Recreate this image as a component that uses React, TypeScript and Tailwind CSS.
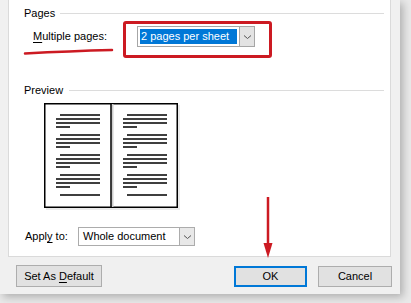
import React from "react";

function Chevron() {
  return (
    <svg width="9" height="6" viewBox="0 0 9 6">
      <path d="M1 1.5 L4.5 4.5 L8 1.5" fill="none" stroke="#555" strokeWidth="1" />
    </svg>
  );
}

function Preview() {
  const groups = [12, 32, 52, 72];
  const lines: React.ReactNode[] = [];
  const page = (ox: number, key: string) => {
    groups.forEach((y, i) => {
      lines.push(<rect key={key + i + "a"} x={ox + 16} y={y - 0.75} width={40} height={1.5} fill="#000" />);
      lines.push(<rect key={key + i + "b"} x={ox + 12} y={y + 4 - 0.75} width={44} height={1.5} fill="#000" />);
      lines.push(<rect key={key + i + "c"} x={ox + 12} y={y + 8 - 0.75} width={44} height={1.5} fill="#000" />);
      lines.push(<rect key={key + i + "d"} x={ox + 12} y={y + 12 - 0.75} width={14} height={1.5} fill="#000" />);
    });
    lines.push(<rect key={key + "last"} x={ox + 16} y={92 - 0.75} width={40} height={1.5} fill="#000" />);
  };
  page(0, "l");
  page(67, "r");
  return (
    <svg width="137" height="108" viewBox="0 0 137 108" className="block">
      <rect x="2" y="2" width="134" height="105" fill="#d8d8d8" opacity="0.5" />
      <rect x="0.75" y="0.75" width="132.5" height="103.5" fill="#fff" stroke="#000" strokeWidth="1.5" />
      <rect x="67.5" y="1" width="2" height="103" fill="#cfcfcf" />
      <rect x="66.25" y="0" width="1.5" height="105" fill="#000" />
      {lines}
    </svg>
  );
}

export default function App() {
  return (
    <div className="w-[411px] h-[303px] overflow-hidden bg-[#e9e9e9] relative font-['Liberation_Sans',Arial,sans-serif] text-[11px] text-black leading-none">
      <div className="w-[400px] h-[294px] bg-[#f0f0f0] shadow-[3px_3px_8px_rgba(0,0,0,0.25)] flex flex-col">
        <div className="ml-[8px] w-[383px] h-[257px] bg-white border-x border-b border-[#dadada] flex flex-col">
          <div className="mt-[5px] h-[16px] flex items-center pl-[15px] pr-[6px]">
            <span>Pages</span>
            <div className="flex-1 h-px bg-[#dcdcdc] ml-[5px]" />
          </div>
          <div className="mt-[5px] h-[21px] flex items-center pl-[24px]">
            <span className="w-[104px]"><span className="underline underline-offset-2">M</span>ultiple pages:</span>
            <div className="w-[118px] h-[21px] flex border border-[#a6a6a6] bg-white">
              <div className="flex-1 p-[2px] flex">
                <span className="bg-[#0078d7] text-white flex items-center px-[1px] w-[97px]">2 pages per sheet</span>
              </div>
              <div className="w-[17px] bg-[#e3e3e3] border-l border-[#a6a6a6] flex items-center justify-center">
                <Chevron />
              </div>
            </div>
          </div>
          <div className="mt-[35px] h-[16px] flex items-center pl-[15px] pr-[6px]">
            <span>Preview</span>
            <div className="flex-1 h-px bg-[#dcdcdc] ml-[6px]" />
          </div>
          <div className="mt-[5px] ml-[35px]">
            <Preview />
          </div>
          <div className="mt-[16px] h-[19px] flex items-center pl-[16px]">
            <span className="w-[53px]">Appl<span className="underline underline-offset-2">y</span> to:</span>
            <div className="w-[117px] h-[19px] flex border border-[#acacac] bg-white">
              <div className="flex-1 pl-[4px] flex items-center">Whole document</div>
              <div className="w-[15px] bg-[#e8e8e8] border-l border-[#acacac] flex items-center justify-center">
                <Chevron />
              </div>
            </div>
          </div>
        </div>
        <div className="mt-[8px] flex items-start">
          <div className="ml-[16px] w-[86px] h-[22px] border border-[#adadad] bg-[#e1e1e1] flex items-center justify-center">
            Set As <span className="underline underline-offset-2 ml-[3px]">D</span>efault
          </div>
          <div className="ml-[132px] mt-[1px] w-[73px] h-[21px] border-2 border-[#0078d7] bg-[#e1e1e1] flex items-center justify-center">
            OK
          </div>
          <div className="ml-[11px] mt-[1px] w-[74px] h-[21px] border border-[#adadad] bg-[#e1e1e1] flex items-center justify-center">
            Cancel
          </div>
        </div>
      </div>

      <div className="absolute left-[123px] top-[21px] w-[149px] h-[37px] border-[3px] border-[#cc1a22] rounded-[3px]" />
      <svg className="absolute left-0 top-0" width="411" height="303" viewBox="0 0 411 303">
        <path d="M25 53.5 Q70 51 112 50" fill="none" stroke="#cc1a22" strokeWidth="2.5" strokeLinecap="round" />
        <line x1="268" y1="197" x2="268" y2="246" stroke="#cc1a22" strokeWidth="2.5" />
        <path d="M263.5 243 L272.5 243 L268 258 Z" fill="#cc1a22" />
      </svg>
    </div>
  );
}
